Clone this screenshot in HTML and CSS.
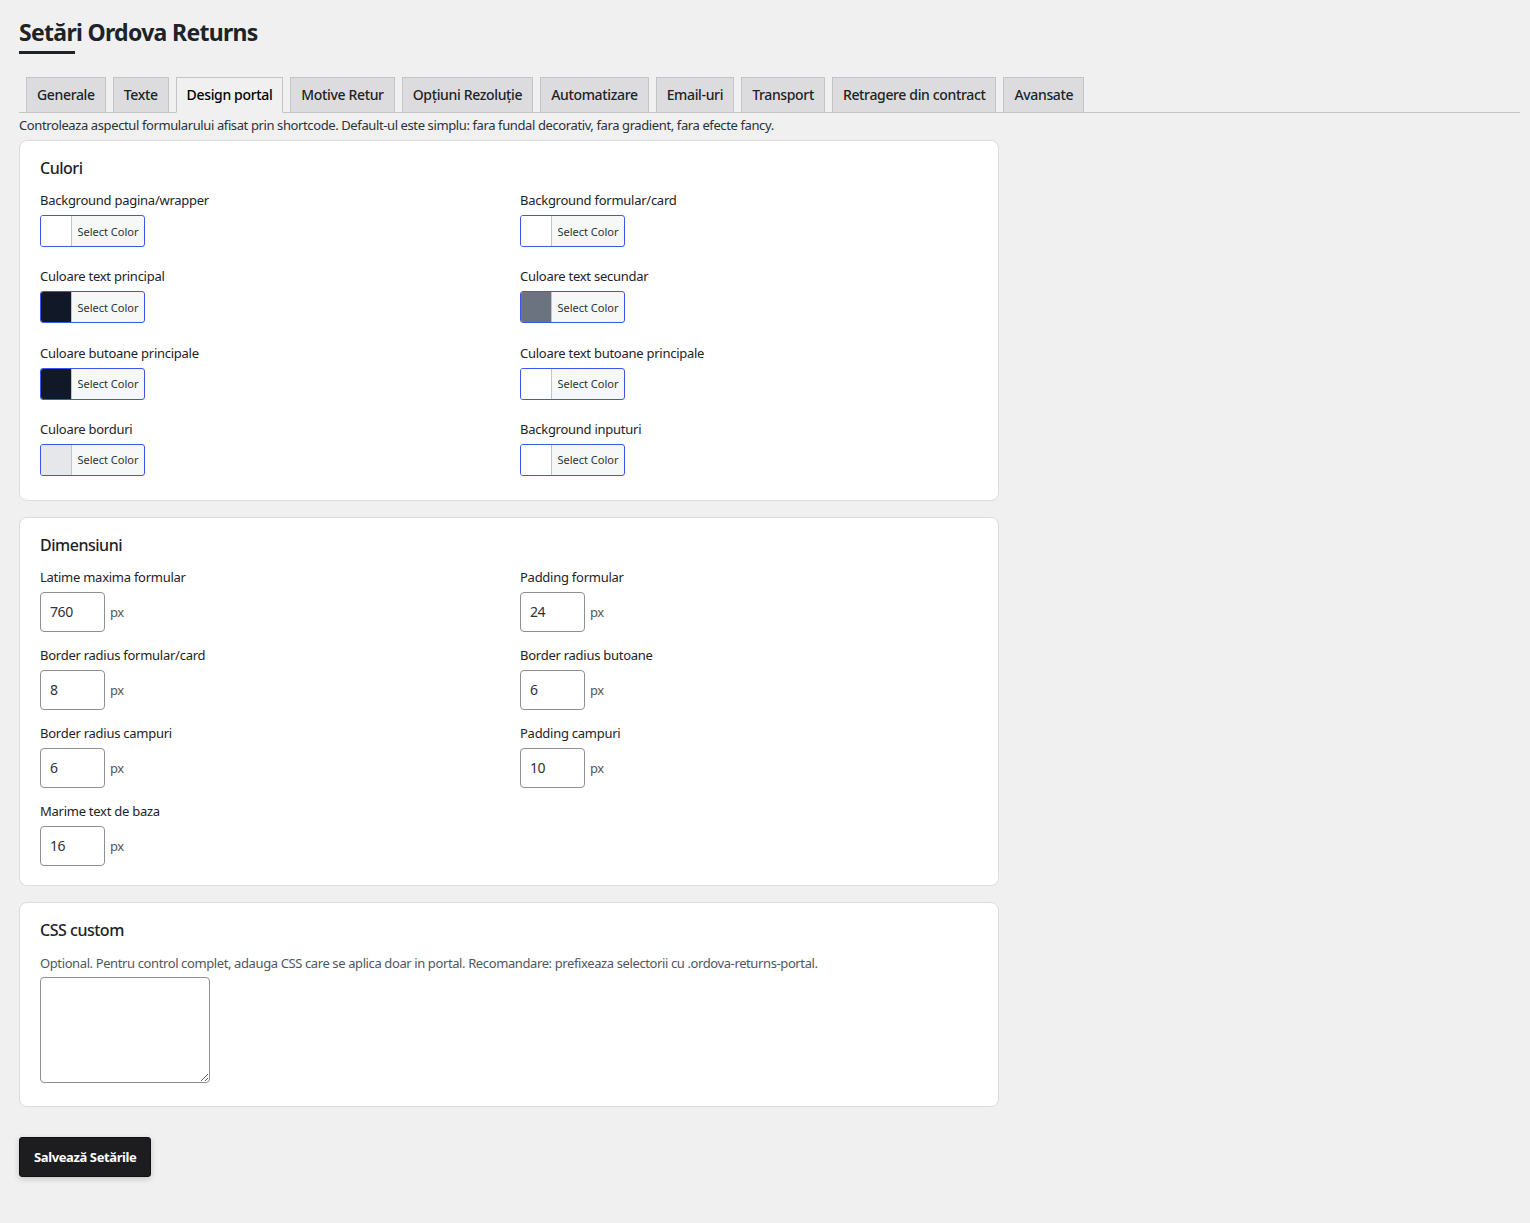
FILE: index.html
```html
<!DOCTYPE html>
<html lang="ro">
<head>
<meta charset="utf-8">
<title>Setări Ordova Returns</title>
<link rel="stylesheet" href="styles.css">
</head>
<body>
<div class="wrap">
  <h1 class="page-title">Setări Ordova Returns</h1>
  <div class="title-bar"></div>

  <nav class="tabs">
    <a class="tab">Generale</a>
    <a class="tab">Texte</a>
    <a class="tab active">Design portal</a>
    <a class="tab">Motive Retur</a>
    <a class="tab">Opțiuni Rezoluție</a>
    <a class="tab">Automatizare</a>
    <a class="tab">Email-uri</a>
    <a class="tab">Transport</a>
    <a class="tab">Retragere din contract</a>
    <a class="tab">Avansate</a>
  </nav>

  <p class="intro">Controleaza aspectul formularului afisat prin shortcode. Default-ul este simplu: fara fundal decorativ, fara gradient, fara efecte fancy.</p>

  <section class="card card-colors">
    <h2 class="card-title">Culori</h2>
    <div class="grid color-grid">
      <div class="field">
        <label class="label">Background pagina/wrapper</label>
        <button class="color-btn"><span class="swatch sw-white"></span><span class="color-text">Select Color</span></button>
      </div>
      <div class="field">
        <label class="label">Background formular/card</label>
        <button class="color-btn"><span class="swatch sw-white"></span><span class="color-text">Select Color</span></button>
      </div>
      <div class="field">
        <label class="label">Culoare text principal</label>
        <button class="color-btn"><span class="swatch sw-dark"></span><span class="color-text">Select Color</span></button>
      </div>
      <div class="field">
        <label class="label">Culoare text secundar</label>
        <button class="color-btn"><span class="swatch sw-gray"></span><span class="color-text">Select Color</span></button>
      </div>
      <div class="field">
        <label class="label">Culoare butoane principale</label>
        <button class="color-btn"><span class="swatch sw-dark"></span><span class="color-text">Select Color</span></button>
      </div>
      <div class="field">
        <label class="label">Culoare text butoane principale</label>
        <button class="color-btn"><span class="swatch sw-white"></span><span class="color-text">Select Color</span></button>
      </div>
      <div class="field">
        <label class="label">Culoare borduri</label>
        <button class="color-btn"><span class="swatch sw-light"></span><span class="color-text">Select Color</span></button>
      </div>
      <div class="field">
        <label class="label">Background inputuri</label>
        <button class="color-btn"><span class="swatch sw-white"></span><span class="color-text">Select Color</span></button>
      </div>
    </div>
  </section>

  <section class="card card-dims">
    <h2 class="card-title">Dimensiuni</h2>
    <div class="grid dim-grid">
      <div class="field">
        <label class="label">Latime maxima formular</label>
        <div class="num-row"><input class="num" type="text" value="760"><span class="unit">px</span></div>
      </div>
      <div class="field">
        <label class="label">Padding formular</label>
        <div class="num-row"><input class="num" type="text" value="24"><span class="unit">px</span></div>
      </div>
      <div class="field">
        <label class="label">Border radius formular/card</label>
        <div class="num-row"><input class="num" type="text" value="8"><span class="unit">px</span></div>
      </div>
      <div class="field">
        <label class="label">Border radius butoane</label>
        <div class="num-row"><input class="num" type="text" value="6"><span class="unit">px</span></div>
      </div>
      <div class="field">
        <label class="label">Border radius campuri</label>
        <div class="num-row"><input class="num" type="text" value="6"><span class="unit">px</span></div>
      </div>
      <div class="field">
        <label class="label">Padding campuri</label>
        <div class="num-row"><input class="num" type="text" value="10"><span class="unit">px</span></div>
      </div>
      <div class="field">
        <label class="label">Marime text de baza</label>
        <div class="num-row"><input class="num" type="text" value="16"><span class="unit">px</span></div>
      </div>
    </div>
  </section>

  <section class="card card-css">
    <h2 class="card-title">CSS custom</h2>
    <p class="help">Optional. Pentru control complet, adauga CSS care se aplica doar in portal. Recomandare: prefixeaza selectorii cu .ordova-returns-portal.</p>
    <textarea class="css-area"></textarea>
  </section>

  <button class="save-btn">Salvează Setările</button>
</div>
</body>
</html>
```

FILE: styles.css
```css
* {
  box-sizing: border-box;
  letter-spacing: -0.03em;
}

body {
  margin: 0;
  background: #f0f0f1;
  color: #1d2327;
  font-family: "Noto Sans", "Open Sans", sans-serif;
  font-size: 13px;
}

.wrap {
  padding: 0 10px 60px 19px;
}

.page-title {
  margin: 0;
  padding-top: 17px;
  font-size: 23px;
  line-height: 30px;
  font-weight: 700;
  color: #1d2327;
}

.title-bar {
  width: 56px;
  height: 3px;
  background: #1d2327;
  margin-top: 4px;
}

.tabs {
  display: flex;
  margin-top: 23px;
  border-bottom: 1px solid #c3c4c7;
}

.tab {
  margin-left: 7px;
  margin-bottom: -1px;
  padding: 5px 10px;
  border: 1px solid #c3c4c7;
  background: #dcdcde;
  color: #1d2327;
  font-size: 14px;
  line-height: 24px;
  font-weight: 500;
  letter-spacing: -0.025em;
  white-space: nowrap;
}

.tab.active {
  background: #f0f0f1;
  border-bottom-color: #f0f0f1;
  color: #000;
}

.intro {
  margin: 2px 0 5px;
  font-size: 13px;
  line-height: 20px;
  color: #2c3338;
}

.card {
  width: 980px;
  background: #fff;
  border: 1px solid #dcdcde;
  border-radius: 8px;
  padding: 17px 20px 18px;
  margin-bottom: 16px;
}

.card-title {
  margin: 0 0 13px;
  font-size: 16px;
  line-height: 20px;
  font-weight: 500;
  color: #1d2327;
}

.grid {
  display: grid;
  grid-template-columns: 1fr 1fr;
  column-gap: 22px;
}

.color-grid {
  row-gap: 20.3px;
  padding-bottom: 6px;
}

.card-dims {
  padding-bottom: 19px;
}

.dim-grid {
  row-gap: 14px;
}

.field {
  display: flex;
  flex-direction: column;
  align-items: flex-start;
}

.label {
  font-size: 13px;
  line-height: 18px;
  margin-bottom: 6px;
  letter-spacing: -0.02em;
  color: #1d2327;
}

.color-btn {
  display: flex;
  align-items: stretch;
  width: 105px;
  height: 32px;
  padding: 0;
  border: 1px solid #3858e9;
  border-radius: 3px;
  background: #f6f7f7;
  overflow: hidden;
  font-family: inherit;
  cursor: pointer;
}

.swatch {
  width: 31px;
  border-right: 1px solid #c3c4c7;
}

.sw-white { background: #ffffff; }
.sw-dark { background: #111827; }
.sw-gray { background: #6b7280; }
.sw-light { background: #e5e7eb; }

.color-text {
  flex: 1;
  display: flex;
  align-items: center;
  justify-content: center;
  font-size: 11px;
  letter-spacing: 0;
  color: #2c3338;
}

.num-row {
  display: flex;
  align-items: center;
}

.num {
  width: 65px;
  height: 40px;
  padding: 0 9px;
  border: 1px solid #8c8f94;
  border-radius: 4px;
  background: #fff;
  font-family: inherit;
  font-size: 14px;
  color: #2c3338;
}

.unit {
  margin-left: 5px;
  font-size: 13px;
  color: #50575e;
}

.card-css {
  padding-bottom: 23px;
}

.help {
  margin: 14px 0 5px;
  font-size: 13px;
  line-height: 18px;
  color: #50575e;
}

.css-area {
  display: block;
  width: 170px;
  height: 106px;
  border: 1px solid #8c8f94;
  border-radius: 4px;
  background: #fff;
  margin: 0;
}

.save-btn {
  margin-top: 14px;
  height: 40px;
  padding: 0 14px;
  border: 1px solid #111;
  border-radius: 3px;
  background: #1d1d20;
  color: #fff;
  font-family: inherit;
  font-size: 13px;
  font-weight: 700;
  box-shadow: 0 2px 6px rgba(0, 0, 0, 0.18);
  cursor: pointer;
}
```
